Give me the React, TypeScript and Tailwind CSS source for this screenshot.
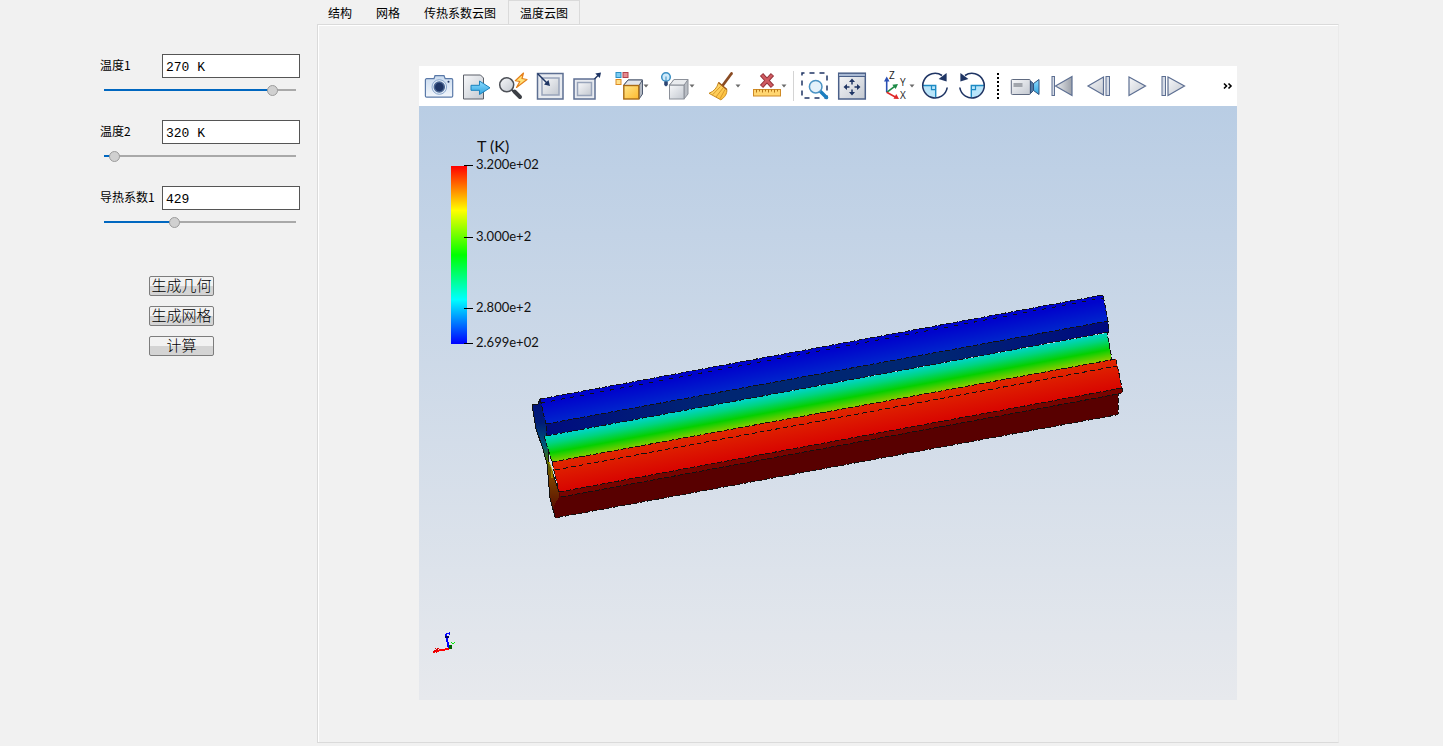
import React, { useState } from 'react';

const NAVY = '#1f3564';
const STEEL = '#5d6f92';

const Icon: React.FC<{ children: React.ReactNode }> = ({ children }) => (
  <svg viewBox="0 0 28 28" className="w-7 h-7 shrink-0 overflow-visible" fill="none" aria-hidden="true">
    {children}
  </svg>
);

const ToolButton: React.FC<{ label: string; menu?: boolean; children: React.ReactNode }> = ({
  label,
  menu,
  children
}) => (
  <button type="button" aria-label={label} title={label} className="flex items-center shrink-0">
    <Icon>{children}</Icon>
    {menu && (
      <svg viewBox="0 0 6 4" className="w-[6px] h-1" aria-hidden="true">
        <path d="M0.5 0.5h5L3 3.5z" fill="#6b6b6b" />
      </svg>
    )}
  </button>
);

const ToolbarDefs = () => (
  <svg className="absolute w-0 h-0" aria-hidden="true">
    <defs>
      <linearGradient id="silver" x1="0" y1="0" x2="1" y2="1">
        <stop offset="0" stopColor="#f7f8fa" />
        <stop offset="1" stopColor="#c3c8d0" />
      </linearGradient>
      <linearGradient id="pale" x1="0" y1="0" x2="0" y2="1">
        <stop offset="0" stopColor="#c9daee" />
        <stop offset="1" stopColor="#f2f6fb" />
      </linearGradient>
      <linearGradient id="sky" x1="0" y1="0" x2="0" y2="1">
        <stop offset="0" stopColor="#8fdcff" />
        <stop offset="1" stopColor="#2fa4e0" />
      </linearGradient>
      <linearGradient id="gold" x1="0" y1="0" x2="1" y2="1">
        <stop offset="0" stopColor="#ffe58a" />
        <stop offset="1" stopColor="#fdb92c" />
      </linearGradient>
      <linearGradient id="gray" x1="0" y1="0" x2="1" y2="0">
        <stop offset="0" stopColor="#eceef0" />
        <stop offset="1" stopColor="#9a9fa8" />
      </linearGradient>
    </defs>
  </svg>
);

const RotateShape = () => (
  <>
    <path d="M2.5 13.5h12.2v12.2A12.3 12.3 0 0 1 2.5 13.5z" fill="#b9e5fa" />
    <path d="M1.5 13.5h13.2v12" stroke="#1d8bc4" strokeWidth="1.4" />
    <path d="M10.5 13.5v4.2h4.2" stroke="#1d8bc4" strokeWidth="1.2" />
    <path d="M26.2 15.5A12.3 12.3 0 1 1 21 3.500" stroke={NAVY} strokeWidth="1.6" />
    <path d="M25.6 1v8.500l-8-2.400z" fill={NAVY} />
  </>
);

const Toolbar = () => (
  <div className="flex items-center h-10 pl-[6px] pr-1 bg-white" role="toolbar" aria-label="视图工具">
    <ToolbarDefs />
    <div className="flex gap-[9px]">
      <ToolButton label="截图">
        <path
          d="M1.6 6.7H9l1-3h9l1.2 3h6.3a1.2 1.2 0 0 1 1.2 1.2v16a1.2 1.2 0 0 1-1.2 1.2H1.6a1.2 1.2 0 0 1-1.2-1.2v-16a1.2 1.2 0 0 1 1.2-1.2z"
          fill="url(#pale)"
          stroke="#5a79a8"
          strokeWidth="1.2"
        />
        <circle cx="14.3" cy="15" r="7.3" fill="#e3edf8" stroke="#8aa6cc" />
        <circle cx="14.3" cy="15" r="5" fill={NAVY} stroke="#4c6793" strokeWidth="1.5" />
        <circle cx="23.5" cy="9.8" r="1" fill={NAVY} />
      </ToolButton>
      <ToolButton label="导出">
        <path d="M1.5 3h17l3 3v21h-20z" fill="url(#silver)" stroke="#5b5f68" />
        <path
          d="M9 13.3h8.5V9L28 15.8l-10.500 6.700v-4.200H9z"
          fill="url(#sky)"
          stroke="#1a82bd"
          strokeLinejoin="round"
        />
      </ToolButton>
      <ToolButton label="快速缩放">
        <path d="M12.500 17.500l3 3" stroke="#3c3f45" strokeWidth="2" />
        <path d="M15.500 19.500l5.500 5.500" stroke="#3c3f45" strokeWidth="4" strokeLinecap="round" />
        <circle cx="7.7" cy="12.8" r="7" fill="url(#silver)" stroke="#4d5057" strokeWidth="1.5" />
        <path
          d="M24.5 1l-8.200 7.700 4.500.8-3.300 6L28 7.500l-5-1z"
          fill="#ffe27a"
          stroke="#e5801c"
          strokeWidth="1.2"
          strokeLinejoin="round"
        />
      </ToolButton>
      <ToolButton label="适应窗口">
        <rect x="1.5" y="1.5" width="25.5" height="25.5" fill="#e8ebf0" stroke={STEEL} strokeWidth="1.5" />
        <rect x="6" y="6" width="17" height="17" fill="url(#silver)" stroke="#98a4ba" strokeWidth="1.5" />
        <path d="M1.5 1.5l10 10" stroke={NAVY} strokeWidth="1.5" />
        <path d="M14 14l-6-1.5L12.500 8z" fill={NAVY} />
      </ToolButton>
      <ToolButton label="缩放到选定">
        <rect x="1" y="7" width="21" height="20" fill="#e8ebf0" stroke={STEEL} strokeWidth="1.5" />
        <rect x="4.5" y="10.5" width="14" height="13" fill="url(#silver)" stroke="#98a4ba" strokeWidth="1.5" />
        <path d="M21.5 7L26 2.5" stroke={NAVY} strokeWidth="1.5" />
        <path d="M28 0.500L26.800 6l-4.500-4.500z" fill={NAVY} />
      </ToolButton>
    </div>

    <div className="flex gap-3 ml-[14px]">
      <ToolButton label="渲染颜色" menu>
        <rect x="1" y="0.5" width="5" height="5" fill="#7ccdf2" stroke="#2a8fc4" />
        <rect x="8" y="0.5" width="5" height="5" fill="#e58b90" stroke="#b2434b" />
        <rect x="1" y="7.5" width="5" height="5" fill="#ffe08a" stroke="#dd8b24" />
        <path d="M8.5 13.5L13 8h14.500v14L24 27V13.500z" fill="#b4bac4" stroke="#4e5a70" />
        <path d="M8.5 13.5L13 8h14.500L24 13.500z" fill="#e2e5ea" stroke="#4e5a70" />
        <rect x="8.8" y="13.5" width="15" height="13.5" fill="url(#gold)" stroke="#a86a14" strokeWidth="1.4" />
      </ToolButton>
      <ToolButton label="透明度" menu>
        <path d="M8.5 13.200L13 7.500h14v14.500l-4 5V13.200z" fill="#b9bdc4" stroke="#8b9099" />
        <path d="M8.5 13.200L13 7.500h14l-4 5.700z" fill="#e9ebee" stroke="#8b9099" />
        <rect x="8.5" y="13.2" width="14.5" height="13.8" fill="url(#silver)" stroke="#8b9099" />
        <circle cx="5" cy="5" r="4.3" fill="#cfeafa" stroke="#3a8fc4" strokeWidth="1.5" />
        <path d="M5 4.500v5" stroke="#3a8fc4" />
        <path d="M3.200 9.500h3.600v3.500L5 14.500l-1.800-1.500z" fill="#2c4573" />
      </ToolButton>
      <ToolButton label="清除" menu>
        <path d="M24.5 1.5L16 13" stroke="#8a4b23" strokeWidth="2.800" strokeLinecap="round" />
        <path
          d="M11.5 10.500l8.300 7c.5 4-2 8-6 10.300L2 21.300c5-2 8-5.300 9.500-10.800z"
          fill="url(#gold)"
          stroke="#c98a1c"
          strokeLinejoin="round"
        />
        <path d="M13.5 14.500l-8 8.300M16 16l-7 9M18 17.500l-5 9.300" stroke="#d99a2c" />
        <path d="M11.5 10.500l8.300 7" stroke="#a05a1c" strokeWidth="1.5" />
      </ToolButton>
      <ToolButton label="删除测量" menu>
        <path d="M8.500 2.500l11 12M19.500 2.500l-11 12" stroke="#93333a" strokeWidth="4.400" />
        <path d="M9 3l10 11M19 3L9 14" stroke="#cf5a60" strokeWidth="2.600" />
        <rect x="0.5" y="17.5" width="27" height="6.5" fill="#ffd671" stroke="#cf8a24" />
        <path
          d="M3.5 17.500v3M6.500 17.500v2M9.500 17.500v3M12.500 17.500v2M15.500 17.500v3M18.500 17.500v2M21.500 17.500v3M24.500 17.500v2"
          stroke="#b47416"
        />
      </ToolButton>
    </div>

    <div className="w-px h-[30px] ml-[6px] bg-[#d4d4d4]" />

    <div className="flex gap-[9px] ml-[7px]">
      <ToolButton label="框选缩放">
        <rect
          x="1"
          y="1"
          width="25"
          height="25"
          stroke={NAVY}
          strokeWidth="1.5"
          strokeDasharray="5 5"
          strokeDashoffset="2.5"
        />
        <path d="M19.500 19.500l6 6" stroke="#1c7fc0" strokeWidth="3.500" strokeLinecap="round" />
        <circle cx="14.7" cy="14.7" r="6.300" fill="#e4f1fa" stroke="#4b93c4" strokeWidth="1.5" />
      </ToolButton>
      <ToolButton label="平移">
        <rect x="0.7" y="1.2" width="26.6" height="25.8" fill="url(#silver)" stroke="#4b6089" strokeWidth="1.5" />
        <path d="M1.500 3h25" stroke="#a9bad4" strokeWidth="2" />
        <path d="M1 4.500h26" stroke="#4b6089" />
        <path d="M14 12.500v-4M14 17.500v4M11.500 15h-4M16.500 15h4" stroke={NAVY} strokeWidth="1.5" />
        <path d="M14 6.500l3 3.500h-6zM14 23.500l3-3.500h-6zM5.500 15L9 12v6zM22.500 15L19 12v6z" fill={NAVY} />
      </ToolButton>
    </div>

    <div className="flex ml-[15px]">
      <ToolButton label="坐标方向" menu>
        <path d="M5.7 20.300V8" stroke="#2b50b4" strokeWidth="1.6" />
        <path d="M5.7 4.500l2.800 5H3z" fill="#2b50b4" />
        <path d="M5.7 20.300l8-6" stroke="#1d8b46" strokeWidth="1.6" />
        <path d="M17 12l-2.300 5-3.400-4.200z" fill="#1d8b46" />
        <path d="M5.7 20.300l9 5" stroke="#e02828" strokeWidth="1.6" />
        <path d="M18 27l-5.500-.2 2.800-4.800z" fill="#e02828" />
        <g fill="#222" fontFamily="Open Sans, sans-serif" fontSize="10">
          <text x="8" y="7">
            Z
          </text>
          <text x="19" y="14">
            Y
          </text>
          <text x="19" y="27">
            X
          </text>
        </g>
      </ToolButton>
    </div>

    <div className="flex gap-[9px] ml-[6px]">
      <ToolButton label="顺时针旋转">
        <RotateShape />
      </ToolButton>
      <ToolButton label="逆时针旋转">
        <g transform="matrix(-1 0 0 1 28 0)">
          <RotateShape />
        </g>
      </ToolButton>
    </div>

    <div className="h-[26px] ml-[11px] border-l-2 border-dotted border-black" />

    <div className="flex gap-[9px] ml-3">
      <ToolButton label="录制动画">
        <rect x="0.3" y="7.5" width="19" height="15" rx="1" fill="url(#silver)" stroke="#5f6a80" />
        <rect x="2.5" y="11" width="9" height="4" fill="#a2a6ad" />
        <path d="M19.5 9l3 2.500v7l-3 3z" fill="#54779f" stroke="#31517c" />
        <path d="M28 7.500v15l-5.500-4v-7z" fill="url(#sky)" stroke="#31517c" />
      </ToolButton>
      <ToolButton label="第一帧">
        <rect x="4" y="4.5" width="2.5" height="19" fill="#d6dce6" stroke={STEEL} />
        <path d="M24 4.500v19L7.500 14z" fill="url(#gray)" stroke={STEEL} strokeWidth="1.2" />
      </ToolButton>
      <ToolButton label="上一帧">
        <path d="M18.5 5v18L3 14z" fill="url(#silver)" stroke={STEEL} strokeWidth="1.2" />
        <rect x="21" y="4.5" width="3.500" height="19" fill="#d6dce6" stroke={STEEL} />
      </ToolButton>
      <ToolButton label="播放">
        <path d="M7 5v18.500L23.500 14z" fill="url(#silver)" stroke={STEEL} strokeWidth="1.2" />
      </ToolButton>
      <ToolButton label="下一帧">
        <rect x="3" y="4.5" width="3.500" height="19" fill="#d6dce6" stroke={STEEL} />
        <path d="M9 5v18.500L25.500 14z" fill="url(#silver)" stroke={STEEL} strokeWidth="1.2" />
      </ToolButton>
    </div>

    <button type="button" aria-label="更多工具" className="ml-auto">
      <svg viewBox="0 0 10 8" className="w-[10px] h-2" fill="none" aria-hidden="true">
        <path d="M1 1.500L3.500 4 1 6.500M5.500 1.500L8 4 5.500 6.500" stroke="#000" strokeWidth="1.6" />
      </svg>
    </button>
  </div>
);

const ticks = [
  { y: 59, text: '3.200e+02' },
  { y: 131, text: '3.000e+2' },
  { y: 202, text: '2.800e+2' },
  { y: 237, text: '2.699e+02' }
];

const Viewport = () => (
  <svg viewBox="0 0 818 594" className="block w-full h-auto" role="img" aria-label="温度云图">
    <defs>
      <linearGradient id="backdrop" x1="0" y1="0" x2="0" y2="1">
        <stop offset="0" stopColor="#b9cde4" />
        <stop offset="1" stopColor="#e7e9ed" />
      </linearGradient>
      <linearGradient id="scale" x1="0" y1="0" x2="0" y2="1">
        <stop offset="0" stopColor="#f00" />
        <stop offset="0.25" stopColor="#ff0" />
        <stop offset="0.5" stopColor="#0f0" />
        <stop offset="0.75" stopColor="#0ff" />
        <stop offset="1" stopColor="#00f" />
      </linearGradient>
      <linearGradient id="cold" gradientUnits="userSpaceOnUse" x1="121" y1="293" x2="125.5" y2="317.5">
        <stop offset="0.2" stopColor="#0004cc" />
        <stop offset="1" stopColor="#0024cc" />
      </linearGradient>
      <linearGradient id="coldDark" x1="0" y1="0" x2="1" y2="0">
        <stop offset="0" stopColor="#000c80" />
        <stop offset="0.3" stopColor="#002672" />
        <stop offset="0.7" stopColor="#002672" />
        <stop offset="1" stopColor="#000880" />
      </linearGradient>
      <linearGradient id="middle" gradientUnits="userSpaceOnUse" x1="125" y1="330" x2="130" y2="357">
        <stop offset="0" stopColor="#00d4d4" />
        <stop offset="0.3" stopColor="#00d480" />
        <stop offset="0.65" stopColor="#04d000" />
        <stop offset="1" stopColor="#86cc00" />
      </linearGradient>
      <linearGradient id="hot" gradientUnits="userSpaceOnUse" x1="133" y1="356" x2="138.5" y2="386">
        <stop offset="0" stopColor="#e02800" />
        <stop offset="1" stopColor="#d80400" />
      </linearGradient>
      <linearGradient id="endCap" x1="0" y1="0" x2="0" y2="1">
        <stop offset="0" stopColor="#001078" />
        <stop offset="0.2" stopColor="#001c78" />
        <stop offset="0.4" stopColor="#005a78" />
        <stop offset="0.52" stopColor="#507000" />
        <stop offset="0.68" stopColor="#7a4000" />
        <stop offset="1" stopColor="#500000" />
      </linearGradient>
    </defs>
    <rect width="818" height="594" fill="url(#backdrop)" />

    {/* colour scale */}
    <rect x="32" y="60" width="16" height="178" fill="url(#scale)" />
    <g fill="#111" fontFamily="Lato, sans-serif">
      <text x="58" y="46" fontSize="16">
        T (K)
      </text>
      {ticks.map((t) => (
        <g key={t.text}>
          <path d={`M45 ${t.y + 0.5}h9`} stroke="#000" />
          <text x="57" y={t.y + 4} fontSize="13">
            {t.text}
          </text>
        </g>
      ))}
    </g>

    {/* extruded profile */}
    <g strokeLinejoin="round" shapeRendering="crispEdges">
      <path
        d="M113 299l6-1 2-5 8 20v40l12 36-5 22-5-19-3-34-4-15-7-20z"
        fill="url(#endCap)"
        stroke="#111"
      />
      <path d="M121 293l563-104 5 26-562 103z" fill="url(#cold)" />
      <path d="M127 318l562-103 1 11-563 104z" fill="url(#coldDark)" />
      <path d="M125 330l563-103 5 27-560 103z" fill="url(#middle)" />
      <path d="M140 386l563-104v5l-4 1v20l-2 1-561 103-1-12 5-9z" fill="#580000" />
      <path d="M140 386l563-104v5l-561 104z" fill="#780400" />
      <path d="M133 356l564-103 6 29-563 104z" fill="url(#hot)" />
    </g>
    <g stroke="#111" strokeDasharray="5 2" fill="none" shapeRendering="crispEdges">
      <path d="M121 293l563-104 5 26 1 11-2 1 5 26M121 293l6 25v12M127 318l562-103M127 330l563-104" />
      <path d="M122 297l562-105" strokeDasharray="4 6" />
      <path d="M125 330l8 26M133 356l564-103 6 29v5l-4 1v20l-2 1-561 103M133 356l7 30M140 386l563-104M142 391l557-103" />
      <path d="M136 364l562-104" strokeDasharray="5 3" />
    </g>
    <path d="M130 356l3 8v8" fill="none" stroke="#d8c000" />

    {/* orientation marker */}
    <g fill="none" shapeRendering="crispEdges">
      <path d="M30 543l-3-15" stroke="#00f" strokeWidth="2" />
      <path d="M26 531h4" stroke="#000060" strokeWidth="2" />
      <path d="M27 527h4M30 526v3" stroke="#00f" />
      <path d="M30 543l-8 1-8 2" stroke="#f00" strokeWidth="2" />
      <path d="M16 542l3 3M14 546l6-4M18 547l-2-2" stroke="#d00" />
      <rect x="30" y="539" width="3" height="4" fill="#006000" />
      <path d="M32 536l2 2 2-2" stroke="#0e0" />
    </g>
  </svg>
);

const SliderField: React.FC<{ id: string; label: string; text: string; start: number }> = ({
  id,
  label,
  text,
  start
}) => {
  const [value, setValue] = useState(start);
  return (
    <div>
      <div className="flex items-center justify-between">
        <label htmlFor={id} className="pb-[2px] text-[12px] leading-5 whitespace-nowrap">
          {label}
        </label>
        <input
          id={id}
          type="text"
          defaultValue={text}
          className="w-[138px] h-6 px-[3px] pt-[2px] bg-white border border-[#555] text-[13px] font-['Liberation_Mono','Noto_Sans_CJK_SC',monospace]"
        />
      </div>
      <div className="flex mt-[6px] mx-1">
        <input
          type="range"
          min={0}
          max={100}
          value={value}
          onChange={(e) => setValue(Number(e.target.value))}
          aria-label={label}
          className="w-full h-3 appearance-none bg-transparent bg-no-repeat bg-center bg-[length:100%_2px] [&::-webkit-slider-thumb]:appearance-none [&::-webkit-slider-thumb]:w-[11px] [&::-webkit-slider-thumb]:h-[11px] [&::-webkit-slider-thumb]:rounded-full [&::-webkit-slider-thumb]:border [&::-webkit-slider-thumb]:border-[#9c9c9c] [&::-webkit-slider-thumb]:bg-[#d0d0d0]"
          style={{ backgroundImage: `linear-gradient(to right, #0067c0 ${value}%, #a9a9a9 ${value}%)` }}
        />
      </div>
    </div>
  );
};

const actions = ['生成几何', '生成网格', '计算'];
const tabs = ['结构', '网格', '传热系数云图', '温度云图'];

export default function App() {
  const [tab, setTab] = useState('温度云图');

  return (
    <div className="flex min-h-screen bg-[#f1f1f1] text-black font-['Noto_Sans_CJK_SC',sans-serif]">
      <aside className="w-[316px] shrink-0 pl-[100px] pr-4 pt-[54px]">
        <div className="flex flex-col gap-6">
          <SliderField id="temp1" label="温度1" text="270 K" start={90} />
          <SliderField id="temp2" label="温度2" text="320 K" start={3} />
          <SliderField id="conductivity" label="导热系数1" text="429" start={36} />
        </div>
        <div className="flex flex-col gap-[10px] w-[65px] ml-[49px] mt-12">
          {actions.map((a) => (
            <button
              key={a}
              type="button"
              className="h-5 pb-1 flex items-center justify-center whitespace-nowrap rounded-[2px] border border-[#7d7d7d] bg-linear-to-b from-[#f2f2f2] from-50% to-[#d4d4d4] to-50% text-[15px] font-light leading-none"
            >
              {a}
            </button>
          ))}
        </div>
      </aside>

      <main className="flex-1 min-w-0 mr-[104px] pb-1">
        <div className="flex h-6" role="tablist">
          {tabs.map((t) => (
            <button
              key={t}
              type="button"
              role="tab"
              aria-selected={t === tab}
              onClick={() => setTab(t)}
              className={`px-[11px] pt-px text-[12px] whitespace-nowrap border border-b-0 ${
                t === tab ? 'border-[#dadada]' : 'border-transparent'
              }`}
            >
              {t}
            </button>
          ))}
        </div>
        <div
          role="tabpanel"
          className="ml-px px-[101px] pt-[41px] pb-[42px] border border-[#dadada] border-r-[#eaeaea] shadow-[inset_1px_1px_0_#fff]"
        >
          <Toolbar />
          <Viewport />
        </div>
      </main>
    </div>
  );
}
